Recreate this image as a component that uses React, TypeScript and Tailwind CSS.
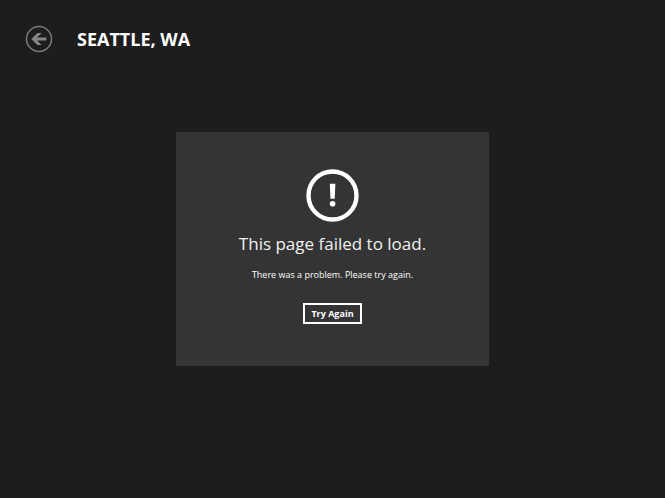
interface HeaderProps {
  city: string;
}

interface LoadErrorProps {
  title: string;
  message: string;
  onRetry: () => void;
}

function BackIcon() {
  return (
    <svg viewBox="0 0 28 28" className="size-7" fill="none" aria-hidden="true">
      <circle cx="14" cy="14" r="12.5" stroke="#7b7b7b" strokeWidth="1.5" />
      <path d="M6.3 14 12.4 7.9h4.2l-4.5 4.7h9.3v2.8h-9.3l4.5 4.7h-4.2z" fill="#858585" />
    </svg>
  );
}

function AlertIcon() {
  return (
    <svg viewBox="0 0 54 54" className="size-[54px]" aria-hidden="true">
      <circle cx="27.5" cy="27.5" r="24" fill="none" stroke="#fff" strokeWidth="4.4" />
      <path d="M24.8 15.8h5.6l-.7 15h-4.2z" fill="#fff" />
      <circle cx="27.6" cy="35.7" r="2.8" fill="#fff" />
    </svg>
  );
}

function Header({ city }: HeaderProps) {
  return (
    <header className="flex items-center gap-6 px-[25px] pt-[25px]">
      <button type="button" aria-label="Back" className="cursor-pointer">
        <BackIcon />
      </button>
      <h1 className="text-[18px] leading-7 font-bold uppercase">{city}</h1>
    </header>
  );
}

function LoadError({ title, message, onRetry }: LoadErrorProps) {
  return (
    <section className="flex w-[47%] min-w-[300px] flex-col items-center bg-[#343434] px-4 pt-9 pb-[42px] text-center">
      <AlertIcon />
      <h2 className="mt-2 text-[17px] leading-7 font-normal text-[#f2f2f2]">{title}</h2>
      <p className="mt-2 text-[9px] leading-[17px]">{message}</p>
      <button
        type="button"
        onClick={onRetry}
        className="mt-5 cursor-pointer border-2 border-white px-1.5 text-[9px] leading-[17px] font-bold"
      >
        Try Again
      </button>
    </section>
  );
}

export default function App() {
  return (
    <div className="flex min-h-screen flex-col bg-[#1d1d1d] font-['Open_Sans','Noto_Sans',sans-serif] text-white">
      <Header city="Seattle, WA" />
      <main className="flex flex-col items-center pt-[79px]">
        <LoadError
          title="This page failed to load."
          message="There was a problem. Please try again."
          onRetry={() => window.location.reload()}
        />
      </main>
    </div>
  );
}
